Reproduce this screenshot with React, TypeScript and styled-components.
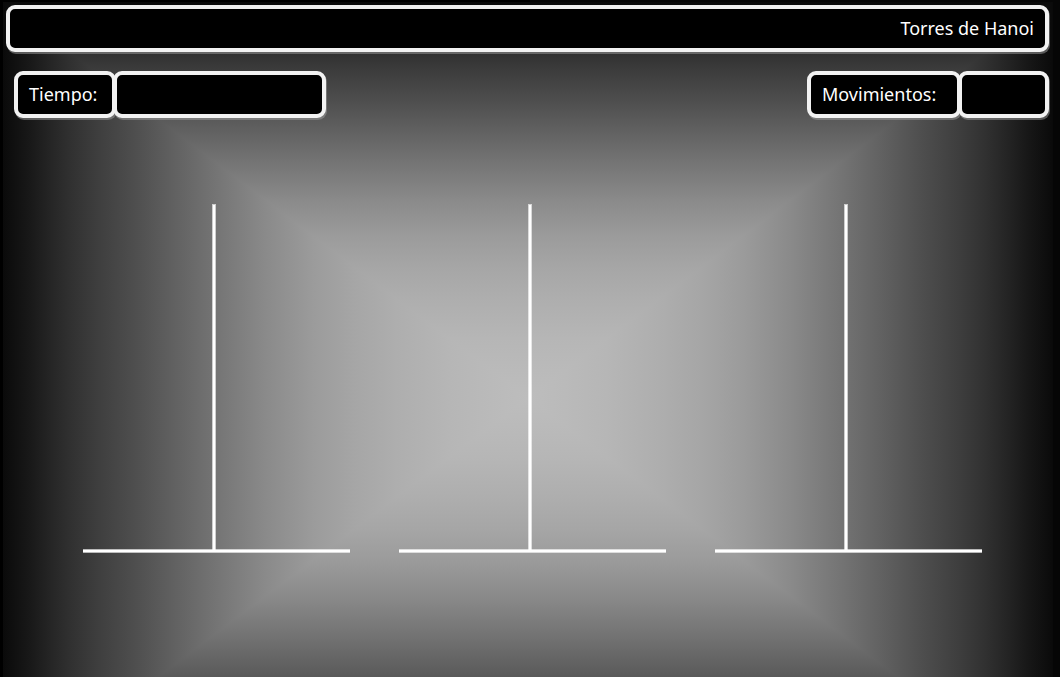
import React from "react";
import styled, { createGlobalStyle } from "styled-components";

const GlobalStyle = createGlobalStyle`
  *, *::before, *::after {
    box-sizing: border-box;
  }
  body {
    margin: 0;
    background: #000;
    color: #fff;
    font-family: "Noto Sans", "Open Sans", sans-serif;
    font-size: 18px;
    line-height: 24px;
  }
`;

/* Light falls off from the middle towards each wall; the darker axis wins. */
const rise = `#0a0a0a 0%, #181818 5%, #252525 9%, #313131 13%, #3e3e3e 18%, #4e4e4e 25%,
  #626262 33%, #737373 40%, #8a8a8a 50%, #9b9b9b 59%, #a6a6a6 67%, #aeaeae 75%,
  #b6b6b6 85%, #bababa 93%, #bdbdbd 100%`;

const Frame = styled.div`
  min-height: 100vh;
  padding: 2px 7px 0 3px;
  display: flex;
  background: linear-gradient(to right, #000 50%, #060606 50%);
`;

const Room = styled.main`
  flex: 1;
  min-width: 0;
  display: flex;
  flex-direction: column;
  gap: 19px;
  padding: 3px 4px 0 3px;
  background-image:
    linear-gradient(to right, ${rise}),
    linear-gradient(to left, ${rise}),
    linear-gradient(to bottom, ${rise}),
    linear-gradient(to top, ${rise});
  background-size: 50% 100%, 50% 100%, 100% 396px, 100% 396px;
  background-position: left top, right top, left top, left 0 top 396px;
  background-repeat: no-repeat;
  background-blend-mode: darken;
`;

const Panel = styled.div<{ $width?: number }>`
  height: 47px;
  padding: 7px 11px;
  border: 4px solid #f2f2f2;
  border-radius: 9px;
  background: #000;
  box-shadow: 1px 2px 0 rgba(160, 160, 160, 0.5);
  white-space: nowrap;
  ${({ $width }) => ($width ? `width: ${$width}px;` : "")}
`;

const TitleBar = styled(Panel)`
  text-align: right;
`;

const Title = styled.h1`
  margin: 0;
  font: inherit;
`;

const Status = styled.div`
  display: flex;
  justify-content: space-between;
  padding-left: 8px;
`;

const Counter = styled.div`
  display: flex;

  & > * + * {
    margin-left: -3px;
  }
`;

const Board = styled.section`
  display: flex;
  justify-content: center;
  gap: 49px;
  padding: 67px 0 16px 10px;
`;

const Tower = styled.div`
  flex: 0 1 267px;
  display: flex;
  flex-direction: column;
`;

const Peg = styled.div`
  width: 4px;
  height: 346px;
  margin: 0 0 -1px 129px;
  border: 1px solid rgba(255, 255, 255, 0.65);
  border-bottom: 0;
  background: #fff;
  background-clip: padding-box;
`;

const Base = styled.div`
  height: 4px;
  border: solid rgba(255, 255, 255, 0.65);
  border-width: 1px 0;
  background: #fff;
  background-clip: padding-box;
`;

const towers = ["A", "B", "C"];

export default function App() {
  return (
    <>
      <GlobalStyle />
      <Frame>
        <Room>
          <TitleBar as="header">
            <Title>Torres de Hanoi</Title>
          </TitleBar>
          <Status>
            <Counter>
              <Panel as="label" htmlFor="time" $width={102}>
                Tiempo:
              </Panel>
              <Panel as="output" id="time" $width={213} />
            </Counter>
            <Counter>
              <Panel as="label" htmlFor="moves" $width={154}>
                Movimientos:
              </Panel>
              <Panel as="output" id="moves" $width={91} />
            </Counter>
          </Status>
          <Board>
            {towers.map((name) => (
              <Tower key={name}>
                <Peg />
                <Base />
              </Tower>
            ))}
          </Board>
        </Room>
      </Frame>
    </>
  );
}
